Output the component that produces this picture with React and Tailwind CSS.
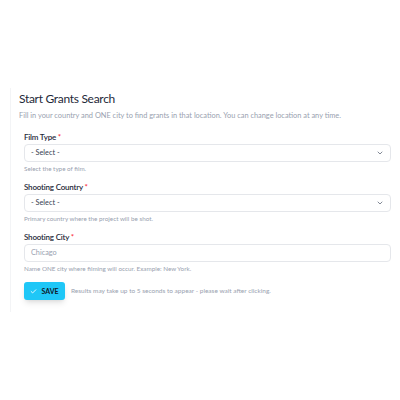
import { ChevronDown, Check } from "lucide-react";

function Field({ label, children, help }) {
    return (
        <div className="mb-[7px]">
            <p className="h-[13px] text-[8px] leading-[13px] font-semibold text-gray-800 tracking-[-0.2px]">
                {label} <span className="text-red-500">*</span>
            </p>
            {children}
            <p className="h-[11px] text-[6.3px] leading-[11px] text-gray-400 mt-[1px]">{help}</p>
        </div>
    );
}

function SelectBox() {
    return (
        <div className="h-[18px] flex items-center justify-between px-[6px] border border-gray-200 rounded-[4px] bg-white">
            <span className="text-[7.3px] text-gray-700">- Select -</span>
            <ChevronDown className="w-[8px] h-[8px] text-gray-500" strokeWidth={2.5} />
        </div>
    );
}

export default function App() {
    return (
        <div className="w-[400px] h-[400px] bg-white pt-[88px] pl-[10px]" style={{ fontFamily: "Lato, 'Noto Sans', sans-serif" }}>
            <div className="border-l border-gray-100 pl-[8px] pr-[9px] pb-[12px]">
                <h1 className="text-[12px] leading-[16px] pt-[3px] text-gray-800 tracking-[-0.3px]">Start Grants Search</h1>
                <p className="text-[7.4px] leading-[11px] mt-[3px] text-gray-400">
                    Fill in your country and ONE city to find grants in that location. You can change location at any time.
                </p>
                <div className="pl-[5px] mt-[10px]">
                    <Field label="Film Type" help="Select the type of film.">
                        <SelectBox />
                    </Field>
                    <Field label="Shooting Country" help="Primary country where the project will be shot.">
                        <SelectBox />
                    </Field>
                    <Field label="Shooting City" help="Name ONE city where filming will occur. Example: New York.">
                        <div className="h-[18px] flex items-center px-[6px] border border-gray-200 rounded-[4px] bg-white">
                            <span className="text-[7.3px] text-gray-400">Chicago</span>
                        </div>
                    </Field>
                    <div className="flex items-center gap-[6px] mt-[8px]">
                        <button className="h-[18px] w-[41px] flex items-center justify-center gap-[4px] rounded-[3px] bg-[#1fc7f7] shadow-md">
                            <Check className="w-[7px] h-[7px] text-white" strokeWidth={3} />
                            <span className="text-[7px] font-bold text-gray-900">SAVE</span>
                        </button>
                        <span className="text-[6.5px] text-gray-400">
                            Results may take up to 5 seconds to appear - please wait after clicking.
                        </span>
                    </div>
                </div>
            </div>
        </div>
    );
}
